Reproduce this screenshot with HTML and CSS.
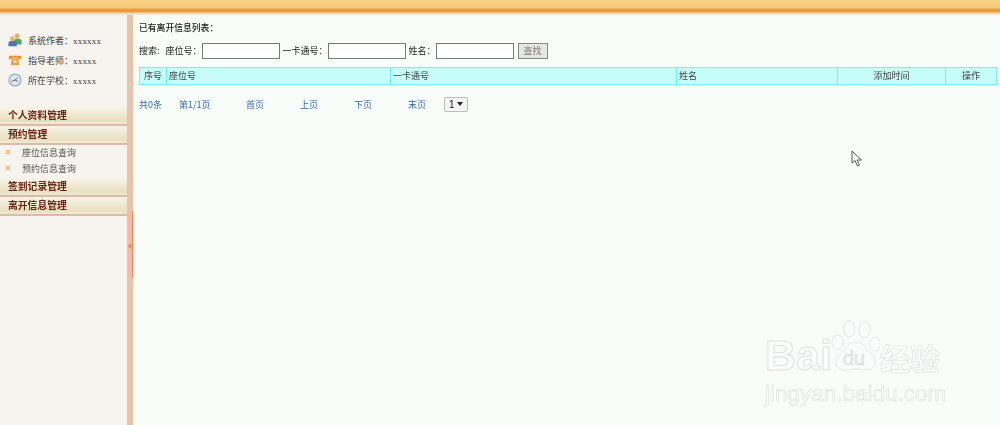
FILE: index.html
```html
<!DOCTYPE html>
<html lang="zh">
<head>
<meta charset="utf-8">
<title>已有离开信息列表</title>
<link rel="stylesheet" href="styles.css">
</head>
<body>
<header class="topbar"></header>
<div class="frame">
  <aside class="sidebar">
    <ul class="info">
      <li class="info-row">
        <svg class="info-icon" viewBox="0 0 16 16"><circle cx="10.500" cy="3.500" r="2.800" fill="#e0b060"/><path d="M7 13V8.500C7 7 8.500 6.500 11 6.500s4.500.7 4.500 2V13z" fill="#4fa65a"/><circle cx="5" cy="6.500" r="2.800" fill="#e8b27a"/><path d="M.5 15v-4C.5 9.500 2.500 9 5 9s5 .5 5 2v4z" fill="#3a78c4"/><path d="M4.500 9.500h1.200l-.2 4h-.8z" fill="#e05a3a"/></svg>
        <span>系统作者：<span class="latin">xxxxxx</span></span>
      </li>
      <li class="info-row">
        <svg class="info-icon" viewBox="0 0 16 16"><path d="M1 3h14v3.500l-2.800.8L11.500 5.500h-7L3.800 7.300 1 6.500z" fill="#ec8f2a"/><path d="M4.500 6h7l1.500 8H3z" fill="#f0a040"/><circle cx="8" cy="9.800" r="2" fill="#fbdcae"/></svg>
        <span>指导老师：<span class="latin">xxxxx</span></span>
      </li>
      <li class="info-row">
        <svg class="info-icon" viewBox="0 0 16 16"><circle cx="8" cy="8" r="6.800" fill="#dce8f0" stroke="#88aecb" stroke-width="1.400"/><path d="M4 9.500 8 8l3-2.500M8 8l3.500 1.800" fill="none" stroke="#8d5a50" stroke-width="1.100"/></svg>
        <span>所在学校：<span class="latin">xxxxx</span></span>
      </li>
    </ul>
    <nav class="menu">
      <h3 class="menu-head">个人资料管理</h3>
      <h3 class="menu-head">预约管理</h3>
      <ul class="submenu">
        <li class="submenu-item">座位信息查询</li>
        <li class="submenu-item">预约信息查询</li>
      </ul>
      <h3 class="menu-head">签到记录管理</h3>
      <h3 class="menu-head">离开信息管理</h3>
    </nav>
  </aside>
  <div class="divider"><button class="collapse" aria-label="收起"></button></div>
  <main class="content">
    <p class="title">已有离开信息列表：</p>
    <form class="search">
      <span>搜索:</span>
      <label class="field field-first">座位号：<input class="text-input" type="text"></label>
      <label class="field">一卡通号：<input class="text-input" type="text"></label>
      <label class="field">姓名：<input class="text-input" type="text"></label>
      <button class="find" type="button">查找</button>
    </form>
    <table class="grid">
      <colgroup>
        <col class="c1"><col class="c2"><col class="c3"><col class="c4"><col class="c5"><col class="c6">
      </colgroup>
      <tr>
        <th class="mid">序号</th>
        <th>座位号</th>
        <th>一卡通号</th>
        <th>姓名</th>
        <th class="mid">添加时间</th>
        <th class="mid">操作</th>
      </tr>
    </table>
    <div class="pager">
      <span class="p1">共0条</span>
      <span class="p2">第1/1页</span>
      <span class="p3">首页</span>
      <span class="p3">上页</span>
      <span class="p3">下页</span>
      <span class="p4">末页</span>
      <span class="select">1 <i class="arrow"></i></span>
    </div>
  </main>
</div>
<svg class="cursor" viewBox="0 0 12 17"><path d="M1 1v12l3-2.500L6.500 16l2-1L6 10h4.500z" fill="#fff" stroke="#555" stroke-width="1"/></svg>
<div class="mark">
  <div class="mark-top">
    <span class="mark-bai">Bai</span>
    <span class="paw">
      <svg class="paw-svg" viewBox="0 0 52 58"><g fill="#fafcfb" stroke="#e2e4e3" stroke-width="1"><ellipse cx="8" cy="24" rx="6" ry="7.500"/><ellipse cx="20" cy="10" rx="6" ry="8.500"/><ellipse cx="36" cy="11" rx="6" ry="8.500"/><ellipse cx="47" cy="26" rx="5.500" ry="7.500"/><path d="M27 24c8 0 11 8 17 13 6 6 3 16-7 16-4 0-6-1.500-10-1.500S21 53 16 53C6 53 3 44 10 37c6-5 9-13 17-13z"/></g></svg>
      <span class="paw-du">du</span>
    </span>
    <span class="mark-cn">经验</span>
  </div>
  <div class="mark-url">jingyan.baidu.com</div>
</div>
</body>
</html>
```
FILE: styles.css
```css
* { box-sizing: border-box; }
html, body { margin: 0; height: 100%; overflow: hidden; }
body {
  position: relative;
  display: flex;
  flex-direction: column;
  width: 1000px;
  height: 425px;
  font-family: "Noto Sans CJK SC", "Liberation Sans", sans-serif;
  font-size: 9px;
  color: #333;
  background: #f8fdfa;
}
.topbar {
  flex: 0 0 15px;
  background: linear-gradient(#f8d285 0, #f6c878 8px, #ee9c3a 9px, #ea9a3a 12px, #f3dcc4 13px, #ece2d4 15px);
}
.frame { flex: 1; display: flex; min-height: 0; filter: blur(.3px); }
.sidebar {
  flex: 0 0 127px;
  background: #f7f3ee;
  padding-top: 15px;
}
.info { list-style: none; margin: 0; padding: 0 0 0 8px; }
.info-row { display: flex; align-items: center; gap: 6px; height: 20px; color: #3c3c3c; }
.info-icon { width: 14px; height: 14px; flex: none; }
.latin { font-family: "Liberation Serif", serif; font-size: 9px; letter-spacing: .2px; }
.menu { margin-top: 17px; }
.menu-head {
  margin: 0;
  height: 19px;
  padding-left: 8px;
  font-size: 9.800px;
  font-weight: 700;
  line-height: 17px;
  color: #6a2414;
  background: linear-gradient(#f7f4ea, #e9e0c0 70%, #f0e8d4 88%, #dcb9a6 90%, #e0bca8);
}
.submenu { list-style: none; margin: 0; padding: 0 0 1px; }
.submenu-item {
  position: relative;
  height: 16px;
  padding-left: 22px;
  line-height: 16px;
  color: #555;
}
.submenu-item::before {
  content: "";
  position: absolute;
  left: 6px;
  top: 5px;
  width: 4px;
  height: 4px;
  background: #f8bd7d;
}
.divider {
  position: relative;
  flex: 0 0 6px;
  background: #e6c3ab;
}
.collapse {
  position: absolute;
  left: 0;
  top: 196px;
  width: 6px;
  height: 67px;
  padding: 0;
  border: 0;
  border-right: 1px solid #ee8a58;
  background: #fbb9a3;
}
.collapse::before {
  content: "";
  position: absolute;
  left: 1px;
  top: 32px;
  border: 3px solid transparent;
  border-left: 0;
  border-right: 3px solid #ee8a2e;
}
.content { flex: 1; min-width: 0; padding: 6px 3px 0 6px; background: #f8fdfa; }
.title { margin: 0; height: 14px; line-height: 14px; font-weight: 500; font-size: 8.800px; color: #222; }
.search {
  display: flex;
  align-items: center;
  gap: 3px;
  height: 17px;
  margin-top: 7px;
  font-size: 9px;
  color: #222;
}
.field { display: flex; align-items: center; }
.field-first { margin-left: 3px; }
.text-input {
  width: 78px;
  height: 16px;
  margin: 0;
  padding: 0;
  border: 1px solid #777;
  background: #fff;
}
.find {
  width: 30px;
  height: 16px;
  margin-left: 1px;
  padding: 0;
  border: 1px solid #888;
  background: #e6e6e4;
  color: #777;
  font: inherit;
}
.grid {
  table-layout: fixed;
  width: 857px;
  height: 18px;
  margin-top: 8px;
  border-collapse: collapse;
  background: #c6fdf8;
}
.c1 { width: 27px; }
.c2 { width: 224px; }
.c3 { width: 286px; }
.c4 { width: 161px; }
.c5 { width: 108px; }
.c6 { width: 51px; }
.grid th {
  padding: 0 2px;
  border: 1.500px solid #6ff5f3;
  font-weight: 400;
  font-size: 9px;
  line-height: 16px;
  text-align: left;
  color: #444;
}
.grid th.mid { text-align: center; }
.pager {
  display: flex;
  align-items: center;
  height: 16px;
  margin-top: 11px;
  font-size: 9px;
  color: #2f68b8;
}
.p1 { width: 40px; }
.p2 { width: 67px; }
.p3 { width: 54px; }
.p4 { width: 36px; }
.select {
  display: flex;
  align-items: center;
  justify-content: space-between;
  width: 24px;
  height: 15px;
  padding: 0 4px;
  border: 1px solid #bbb;
  border-radius: 2px;
  background: #f4f4f4;
  color: #222;
  font-family: "Liberation Sans", sans-serif;
  font-size: 10px;
}
.arrow {
  border: 3px solid transparent;
  border-top: 4px solid #222;
  border-bottom: 0;
}
.cursor { position: absolute; left: 851px; top: 150px; width: 12px; height: 17px; }
.mark { position: absolute; left: 765px; top: 318px; width: 200px; color: #fbfdfc; filter: blur(.3px); }
.mark-top { display: flex; align-items: flex-end; height: 57px; }
.mark-bai {
  font-family: "Liberation Sans", sans-serif;
  font-size: 43px;
  font-weight: 700;
  line-height: 40px;
  -webkit-text-stroke: 1px #dfe1e0;
}
.paw { position: relative; width: 50px; height: 56px; margin-left: -2px; }
.paw-svg { width: 50px; height: 56px; display: block; }
.paw-du {
  position: absolute;
  left: 13px;
  top: 29px;
  font-family: "Liberation Sans", sans-serif;
  font-size: 20px;
  line-height: 20px;
  color: #f0f2f1;
  -webkit-text-stroke: .7px #d8dad9;
}
.mark-cn {
  font-size: 30px;
  font-weight: 700;
  line-height: 36px;
  -webkit-text-stroke: .7px #dfe1e0;
  white-space: nowrap;
}
.mark-url {
  margin-top: 7px;
  font-family: "Liberation Sans", sans-serif;
  font-size: 22.500px;
  line-height: 24px;
  white-space: nowrap;
  -webkit-text-stroke: .7px #e0e2e1;
}
```
